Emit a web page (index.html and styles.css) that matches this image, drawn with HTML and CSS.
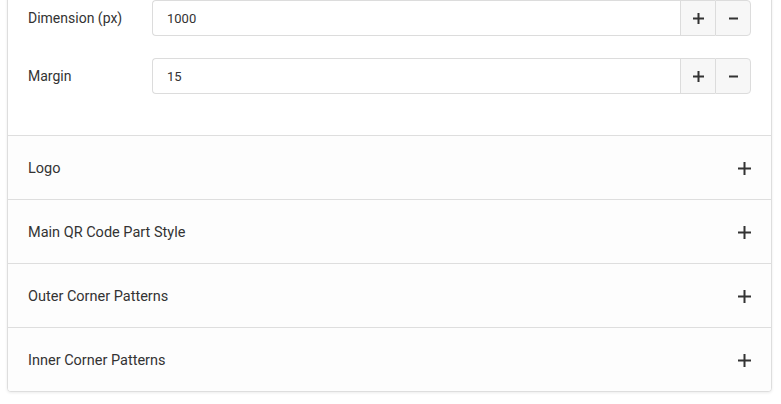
FILE: index.html
```html
<!DOCTYPE html>
<html>
<head>
<meta charset="utf-8">
<link rel="stylesheet" href="styles.css">
</head>
<body>
<div class="page">
  <div class="card">
    <div class="card-body">
      <div class="form-row">
        <label class="label">Dimension (px)</label>
        <div class="input-group">
          <input class="input" type="text" value="1000">
          <button class="btn"><svg width="11" height="11" viewBox="0 0 11 11"><path d="M5.5 0v11M0 5.5h11" stroke="#333" stroke-width="2"/></svg></button>
          <button class="btn btn-last"><svg width="9" height="11" viewBox="0 0 9 11"><path d="M0 5.5h9" stroke="#333" stroke-width="2"/></svg></button>
        </div>
      </div>
      <div class="form-row">
        <label class="label">Margin</label>
        <div class="input-group">
          <input class="input" type="text" value="15">
          <button class="btn"><svg width="11" height="11" viewBox="0 0 11 11"><path d="M5.5 0v11M0 5.5h11" stroke="#333" stroke-width="2"/></svg></button>
          <button class="btn btn-last"><svg width="9" height="11" viewBox="0 0 9 11"><path d="M0 5.5h9" stroke="#333" stroke-width="2"/></svg></button>
        </div>
      </div>
    </div>
    <div class="acc">
      <span>Logo</span>
      <svg class="acc-icon" width="13" height="13" viewBox="0 0 13 13"><path d="M6.5 0v13M0 6.5h13" stroke="#333" stroke-width="2"/></svg>
    </div>
    <div class="acc">
      <span>Main QR Code Part Style</span>
      <svg class="acc-icon" width="13" height="13" viewBox="0 0 13 13"><path d="M6.5 0v13M0 6.5h13" stroke="#333" stroke-width="2"/></svg>
    </div>
    <div class="acc">
      <span>Outer Corner Patterns</span>
      <svg class="acc-icon" width="13" height="13" viewBox="0 0 13 13"><path d="M6.5 0v13M0 6.5h13" stroke="#333" stroke-width="2"/></svg>
    </div>
    <div class="acc">
      <span>Inner Corner Patterns</span>
      <svg class="acc-icon" width="13" height="13" viewBox="0 0 13 13"><path d="M6.5 0v13M0 6.5h13" stroke="#333" stroke-width="2"/></svg>
    </div>
  </div>
</div>
</body>
</html>
```
FILE: styles.css
```css
* { box-sizing: border-box; }
html, body { margin: 0; padding: 0; background: #fff; }
body { font-family: Roboto, "Liberation Sans", sans-serif; color: #333; font-size: 14px; }
.page { padding: 0 9px 12px 7px; }
.card {
  margin-top: -20px;
  border: 1px solid #dedede;
  border-radius: 4px;
  background: #fff;
  box-shadow: 0 1px 3px rgba(0,0,0,0.08);
  overflow: hidden;
}
.card-body {
  padding: 19px 20px 41px 20px;
  display: flex;
  flex-direction: column;
  gap: 22px;
}
.form-row { display: flex; align-items: center; }
.label { width: 124px; flex: none; font-size: 14px; color: #333; }
.input-group { flex: 1; display: flex; height: 36px; }
.input {
  flex: 1;
  min-width: 0;
  height: 36px;
  border: 1px solid #dcdcdc;
  border-right: none;
  border-radius: 4px 0 0 4px;
  padding: 0 14px;
  font-family: Roboto, "Liberation Sans", sans-serif;
  font-size: 13px;
  color: #333;
  background: #fff;
  outline: none;
}
.btn {
  width: 35px;
  height: 36px;
  flex: none;
  border: 1px solid #dcdcdc;
  border-right: none;
  background: #f7f7f7;
  padding: 0;
  margin: 0;
  display: flex;
  align-items: center;
  justify-content: center;
}
.btn-last { border-right: 1px solid #dcdcdc; border-radius: 0 4px 4px 0; width: 36px; }
.acc {
  height: 64px;
  border-top: 1px solid #dedede;
  background: #fdfdfd;
  display: flex;
  align-items: center;
  justify-content: space-between;
  padding: 2px 20px 0 20px;
  font-size: 14.5px;
  color: #333;
}
.acc-icon { display: block; }
```
